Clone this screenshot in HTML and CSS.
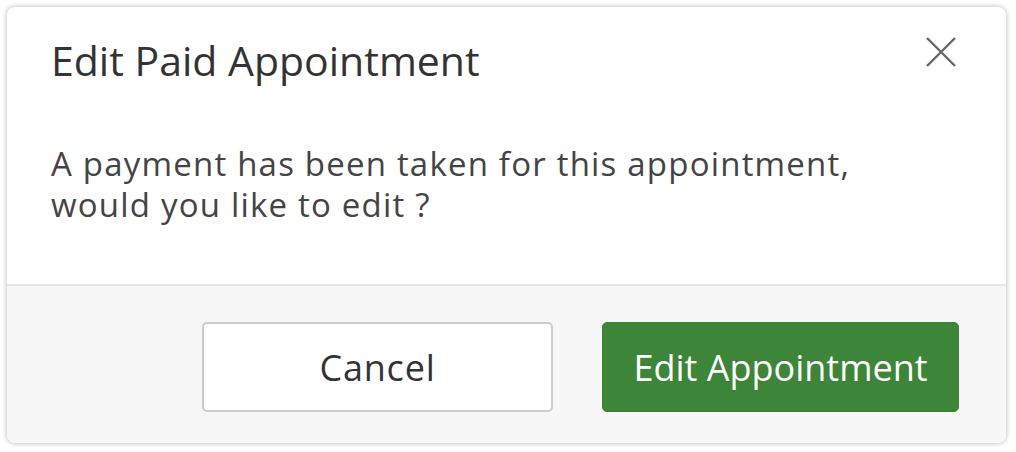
FILE: index.html
```html
<!DOCTYPE html>
<html lang="en-US">
  <head>
    <meta charset="utf-8">
    <title>Edit Paid Appointment</title>
    <link rel="stylesheet" href="styles.css">
  </head>
  <body>
    <div class="modal">
      <header class="modal-header">
        <h2 class="modal-title">Edit Paid Appointment</h2>
        <button class="modal-close" type="button" aria-label="Close">
          <svg width="30" height="30" viewBox="0 0 30 30">
            <path d="M1 1 L29 29 M29 1 L1 29" stroke="#666" stroke-width="2.4" fill="none"/>
          </svg>
        </button>
      </header>
      <div class="modal-body">
        <p>A payment has been taken for this appointment,<br>would you like to edit ?</p>
      </div>
      <footer class="modal-footer">
        <button class="btn btn-default" type="button">Cancel</button>
        <button class="btn btn-primary" type="button">Edit Appointment</button>
      </footer>
    </div>
  </body>
</html>
```

FILE: styles.css
```css
html, body {
  margin: 0;
  background-color: #fff;
}
body {
  padding: 7px 10px 8px 7px;
  font-family: 'Open Sans', 'Noto Sans', sans-serif;
  color: #333;
}
.modal {
  height: 436px;
  box-sizing: border-box;
  display: flex;
  flex-direction: column;
  background-color: #fff;
  border-radius: 8px;
  box-shadow: 0 0 4px 1px rgba(0, 0, 0, .22);
  overflow: hidden;
}
.modal-header {
  display: flex;
  align-items: flex-start;
  justify-content: space-between;
  padding: 27px 50px 0 44px;
}
.modal-title {
  margin: 0;
  font-size: 41px;
  font-weight: 400;
  line-height: 52px;
  color: #333;
}
.modal-close {
  margin-top: 3px;
  padding: 0;
  border: 0;
  background: none;
}
.modal-body {
  flex: 1;
  padding: 57px 44px 0;
}
.modal-body p {
  margin: 0;
  font-size: 33px;
  line-height: 41px;
  letter-spacing: 1.2px;
  color: #444;
}
.modal-footer {
  display: flex;
  justify-content: flex-end;
  gap: 49px;
  height: 159px;
  box-sizing: border-box;
  padding: 36px 47px 0 0;
  background-color: #f7f7f7;
  border-top: 2px solid #e6e6e6;
}
.btn {
  height: 90px;
  box-sizing: border-box;
  border-radius: 5px;
  font-family: inherit;
  font-size: 36px;
  font-weight: 400;
  cursor: pointer;
}
.btn-default {
  width: 351px;
  background-color: #fff;
  border: 2px solid #ccc;
  color: #333;
  letter-spacing: .8px;
}
.btn-primary {
  width: 357px;
  background-color: #3d8539;
  border: 1px solid #3a8036;
  color: #fff;
}
```
